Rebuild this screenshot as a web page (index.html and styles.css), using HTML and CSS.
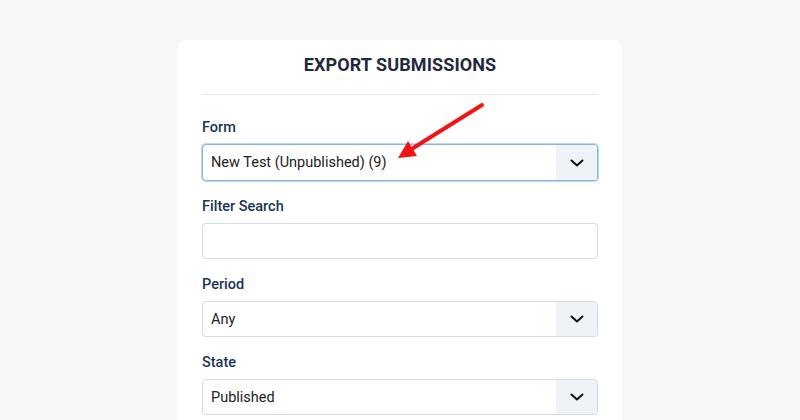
FILE: index.html
```html
<!DOCTYPE html>
<html lang="en">
<head>
<meta charset="utf-8">
<title>Export Submissions</title>
<link rel="stylesheet" href="styles.css">
</head>
<body>
<div class="card">
  <h1 class="title">EXPORT SUBMISSIONS</h1>
  <div class="field">
    <label class="label">Form</label>
    <div class="select focused">
      <span class="value">New Test (Unpublished) (9)</span>
      <span class="addon"><svg width="14" height="8" viewBox="0 0 14 8"><path d="M1.5 1.5 L7 6.5 L12.5 1.5" fill="none" stroke="#111" stroke-width="2" stroke-linecap="round" stroke-linejoin="round"/></svg></span>
    </div>
  </div>
  <div class="field">
    <label class="label">Filter Search</label>
    <div class="input"></div>
  </div>
  <div class="field">
    <label class="label">Period</label>
    <div class="select">
      <span class="value">Any</span>
      <span class="addon"><svg width="14" height="8" viewBox="0 0 14 8"><path d="M1.5 1.5 L7 6.5 L12.5 1.5" fill="none" stroke="#111" stroke-width="2" stroke-linecap="round" stroke-linejoin="round"/></svg></span>
    </div>
  </div>
  <div class="field">
    <label class="label">State</label>
    <div class="select">
      <span class="value">Published</span>
      <span class="addon"><svg width="14" height="8" viewBox="0 0 14 8"><path d="M1.5 1.5 L7 6.5 L12.5 1.5" fill="none" stroke="#111" stroke-width="2" stroke-linecap="round" stroke-linejoin="round"/></svg></span>
    </div>
  </div>
</div>
<svg class="annotation" width="800" height="420" viewBox="0 0 800 420">
  <line x1="482" y1="105" x2="410" y2="150" stroke="#f01414" stroke-width="4" stroke-linecap="round"/>
  <polygon points="398,158 417,156 408,141" fill="#f01414"/>
</svg>
</body>
</html>
```
FILE: styles.css
```css
html, body {
  margin: 0;
  padding: 0;
}
body {
  background: #f7f7f8;
  font-family: Roboto, "Liberation Sans", Arial, sans-serif;
  width: 800px;
  height: 420px;
  overflow: hidden;
  position: relative;
}
.card {
  margin: 40px 0 0 177px;
  width: 445px;
  box-sizing: border-box;
  background: #ffffff;
  border-radius: 10px;
  padding: 0 24px 60px 25px;
}
.title {
  margin: 0 0 23px 0;
  padding: 13px 0 17px;
  border-bottom: 1px solid #e6e8ec;
  text-align: center;
  font-size: 18px;
  line-height: 24px;
  font-weight: 700;
  color: #1f2a3d;
  letter-spacing: 0.1px;
}
.field {
  display: flex;
  flex-direction: column;
  gap: 6px;
  margin-bottom: 16px;
}
.label {
  font-size: 14.5px;
  line-height: 20px;
  font-weight: 500;
  color: #1b3357;
}
.select, .input {
  height: 36px;
  box-sizing: border-box;
  border: 1px solid #d4dbe5;
  border-radius: 4px;
  background: #fff;
  display: flex;
  align-items: stretch;
  overflow: hidden;
}
.select.focused {
  border-color: #86b6de;
  box-shadow: 0 0 0 1px #bcd8ef;
  height: 37px;
}
.value {
  flex: 1;
  display: flex;
  align-items: center;
  padding-left: 8px;
  font-size: 14.5px;
  color: #222;
}
.addon {
  width: 41px;
  background: #eff2f7;
  display: flex;
  align-items: center;
  justify-content: center;
}
.annotation {
  position: absolute;
  left: 0;
  top: 0;
  pointer-events: none;
}
```
